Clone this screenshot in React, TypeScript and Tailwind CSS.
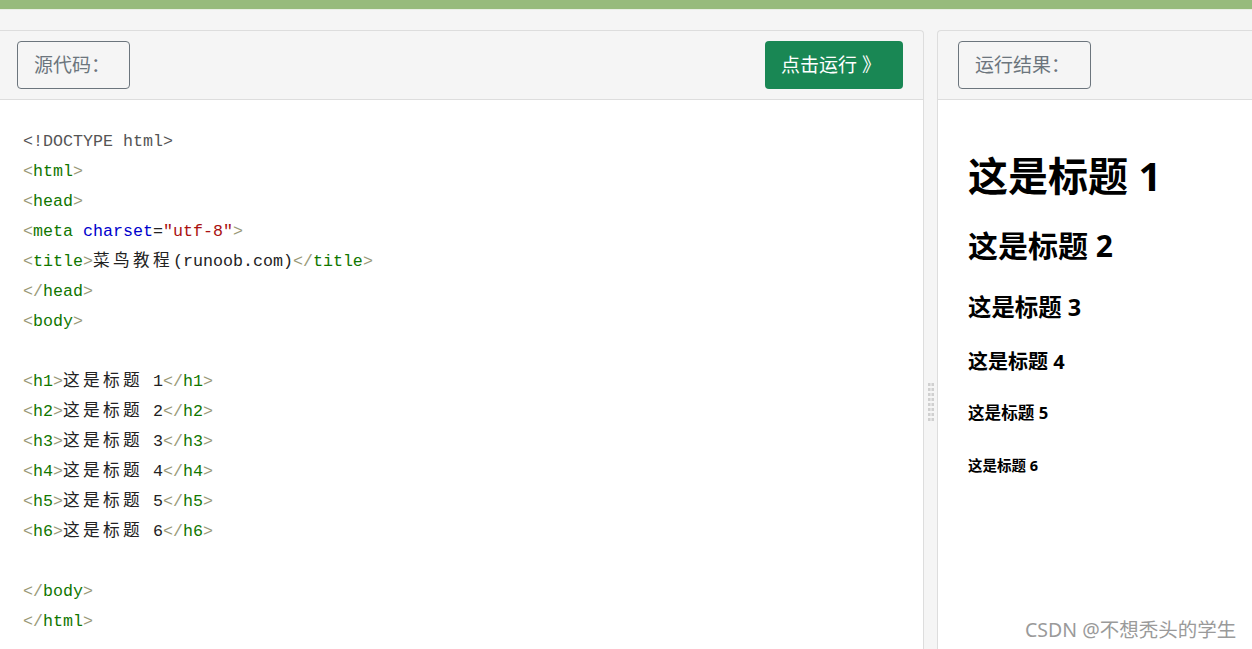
import React from "react";

const mono = { fontFamily: '"Liberation Mono", monospace' };

function Cjk({ children }: { children: string }) {
  return (
    <span className="tracking-[3.33px] leading-none" style={{ fontFamily: '"Noto Sans CJK SC", sans-serif' }}>
      {children}
    </span>
  );
}

const B = ({ c }: { c: string }) => <span className="text-[#999977]">{c}</span>;
const T = ({ c }: { c: string }) => <span className="text-[#117700]">{c}</span>;

function Tag({ name, close }: { name: string; close?: boolean }) {
  return (
    <>
      <B c={close ? "</" : "<"} />
      <T c={name} />
      <B c=">" />
    </>
  );
}

function Line({ children }: { children?: React.ReactNode }) {
  return <div className="h-[30px] leading-[30px] whitespace-pre text-[16.67px] text-[#222]">{children ?? " "}</div>;
}

function Grip() {
  const rows = Array.from({ length: 8 });
  return (
    <svg width="6" height="40" viewBox="0 0 6 40">
      {rows.map((_, i) => (
        <g key={i} fill="#d0d0d0">
          <rect x="0" y={i * 5} width="2.5" height="3" />
          <rect x="3.5" y={i * 5} width="2.5" height="3" />
        </g>
      ))}
    </svg>
  );
}

export default function App() {
  const heads = [
    { n: 1, cls: "text-[40px] leading-[48px] mt-[52px]" },
    { n: 2, cls: "text-[30px] leading-[36px] mt-[28px]" },
    { n: 3, cls: "text-[23.4px] leading-[28px] mt-[29px]" },
    { n: 4, cls: "text-[20px] leading-[24px] mt-[29px]" },
    { n: 5, cls: "text-[16.6px] leading-[20px] mt-[29px]" },
    { n: 6, cls: "text-[14.5px] leading-[16px] mt-[34px]" },
  ];
  return (
    <div
      className="relative w-[1252px] h-[649px] overflow-hidden bg-[#f5f5f5]"
      style={{ fontFamily: '"Noto Sans", "Noto Sans CJK SC", sans-serif' }}
    >
      <div className="h-[9px] bg-[#97bb7c]" />
      <div className="h-[1px] bg-[#e9efe4]" />
      <div className="flex pt-[20px] h-[640px]">
        {/* left panel */}
        <div className="w-[924px] flex flex-col border-t border-r border-[#dddddd] rounded-tr-[4px]">
          <div className="h-[69px] flex items-center justify-between pl-[17px] pr-[20px] border-b border-[#dddddd]">
            <div className="w-[113px] h-[48px] flex items-center pl-[16px] border border-[#6c757d] rounded-[4px] text-[19px] text-[#6c757d]">
              源代码：
            </div>
            <div className="w-[138px] h-[48px] flex items-center pl-[16px] rounded-[4px] bg-[#198754] text-[19px] text-white">
              点击运行 》
            </div>
          </div>
          <div className="flex-1 bg-white pt-[27px] pl-[23px]" style={mono}>
            <Line>
              <span className="text-[#555555]">{"<!DOCTYPE html>"}</span>
            </Line>
            <Line><Tag name="html" /></Line>
            <Line><Tag name="head" /></Line>
            <Line>
              <B c="<" />
              <T c="meta" /> <span className="text-[#0000cc]">charset</span>
              <span className="text-[#222]">=</span>
              <span className="text-[#aa1111]">"utf-8"</span>
              <B c=">" />
            </Line>
            <Line>
              <Tag name="title" />
              <Cjk>菜鸟教程</Cjk>
              <span className="text-[#222]">(runoob.com)</span>
              <Tag name="title" close />
            </Line>
            <Line><Tag name="head" close /></Line>
            <Line><Tag name="body" /></Line>
            <Line />
            {[1, 2, 3, 4, 5, 6].map((n) => (
              <Line key={n}>
                <Tag name={`h${n}`} />
                <Cjk>这是标题</Cjk>
                <span className="text-[#222]">{` ${n}`}</span>
                <Tag name={`h${n}`} close />
              </Line>
            ))}
            <Line />
            <Line><Tag name="body" close /></Line>
            <Line><Tag name="html" close /></Line>
          </div>
        </div>
        {/* divider */}
        <div className="w-[13px] flex justify-center pt-[353px]">
          <div>
            <Grip />
          </div>
        </div>
        {/* right panel */}
        <div className="flex-1 flex flex-col border-t border-l border-[#dddddd] rounded-tl-[4px]">
          <div className="h-[69px] flex items-center pl-[20px] border-b border-[#dddddd]">
            <div className="w-[133px] h-[48px] flex items-center pl-[16px] border border-[#6c757d] rounded-[4px] text-[19px] text-[#6c757d]">
              运行结果：
            </div>
          </div>
          <div className="flex-1 bg-white pl-[30px] flex flex-col items-start text-black font-bold">
            {heads.map((h) => (
              <div key={h.n} className={h.cls}>
                这是标题 {h.n}
              </div>
            ))}
          </div>
        </div>
      </div>
      <div
        className="absolute left-[1025px] top-[616px] text-[19.5px] leading-[28px] text-[#9a9a9a] whitespace-nowrap"
        style={{ textShadow: "0 0 1px #fff" }}
      >
        CSDN @不想秃头的学生
      </div>
    </div>
  );
}
